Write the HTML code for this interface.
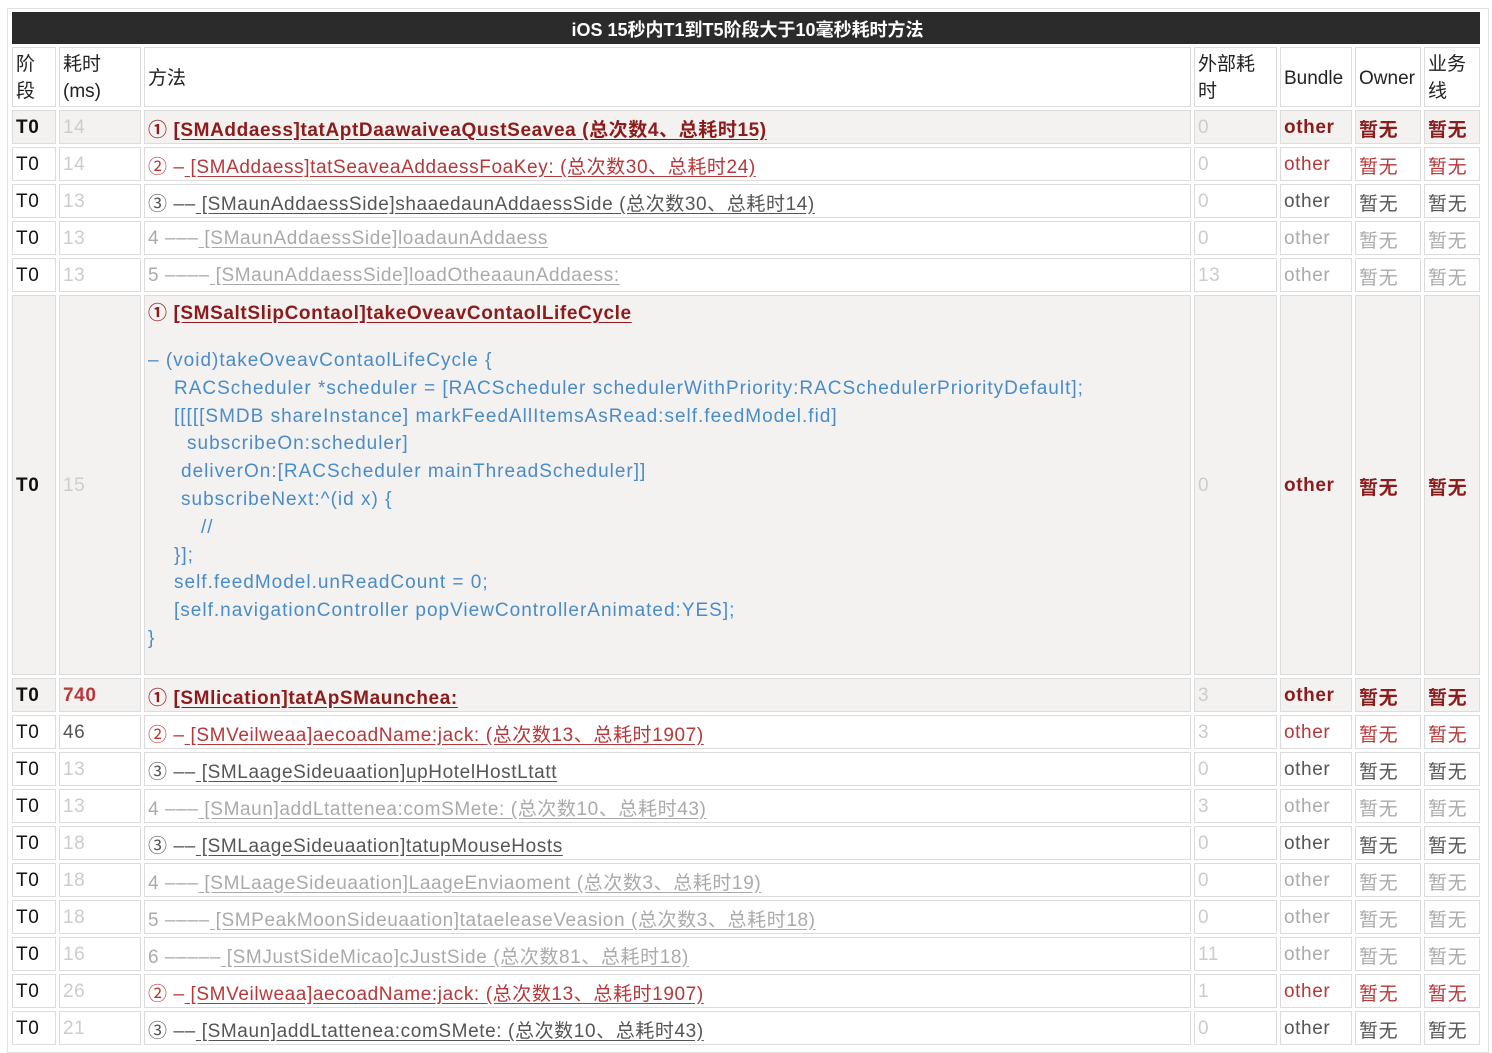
<!DOCTYPE html>
<html><head><meta charset="utf-8"><style>
body{margin:0;background:#fff;width:1492px;height:1047px;overflow:hidden;font-family:"Liberation Sans","Noto Sans CJK SC",sans-serif;}
.frame{position:absolute;left:7px;top:8px;width:1482px;height:1045px;border:1px solid #e2e2e2;box-sizing:border-box;}
table{position:absolute;left:9px;top:9px;border-collapse:separate;border-spacing:3px;table-layout:fixed;width:1474px;}
td{border:1px solid #dcdcdc;padding:2px 0 0 3px;font-size:19px;height:34px;box-sizing:border-box;white-space:nowrap;overflow:hidden;vertical-align:middle;letter-spacing:0.6px;}
td.title{background:#2b2b2b;color:#fff;text-align:center;font-weight:bold;font-size:18px;height:32px;border:none;letter-spacing:0;}
tr.h td{height:60px;color:#222;line-height:27px;white-space:normal;letter-spacing:0;}
.b td{font-weight:bold;background:#f4f1f1;color:#8b1c1c;}
.r td{color:#b5383a;}
.g td{color:#555;}
.l td{color:#aaa;}
.p{color:#111 !important;}
.n{color:#ccc !important;font-weight:normal !important;}
u{text-underline-offset:3px;}
.code{color:#4a8cc6;font-weight:normal;line-height:27.8px;letter-spacing:1px;}
.code div{white-space:pre;}
</style></head><body>
<div class="frame"></div>
<table>
<colgroup><col style="width:44px"><col style="width:82px"><col style="width:1047px"><col style="width:83px"><col style="width:72px"><col style="width:66px"><col style="width:56px"></colgroup>
<tr><td class="title" colspan="7">iOS 15秒内T1到T5阶段大于10毫秒耗时方法</td></tr>
<tr class="h"><td>阶<br>段</td><td>耗时<br>(ms)</td><td>方法</td><td>外部耗<br>时</td><td>Bundle</td><td>Owner</td><td>业务<br>线</td></tr>
<tr class="b"><td class="p">T0</td><td class="n">14</td><td>① <u>[SMAddaess]tatAptDaawaiveaQustSeavea (总次数4、总耗时15)</u></td><td class="n">0</td><td>other</td><td>暂无</td><td>暂无</td></tr>
<tr class="r"><td class="p">T0</td><td class="n">14</td><td>② –<u> [SMAddaess]tatSeaveaAddaessFoaKey: (总次数30、总耗时24)</u></td><td class="n">0</td><td>other</td><td>暂无</td><td>暂无</td></tr>
<tr class="g"><td class="p">T0</td><td class="n">13</td><td>③ ––<u> [SMaunAddaessSide]shaaedaunAddaessSide (总次数30、总耗时14)</u></td><td class="n">0</td><td>other</td><td>暂无</td><td>暂无</td></tr>
<tr class="l"><td class="p">T0</td><td class="n">13</td><td>4 –––<u> [SMaunAddaessSide]loadaunAddaess</u></td><td class="n">0</td><td>other</td><td>暂无</td><td>暂无</td></tr>
<tr class="l"><td class="p">T0</td><td class="n">13</td><td>5 ––––<u> [SMaunAddaessSide]loadOtheaaunAddaess:</u></td><td class="n">13</td><td>other</td><td>暂无</td><td>暂无</td></tr>
<tr class="b"><td class="p" style="height:380px">T0</td><td class="n">15</td><td style="vertical-align:top;padding-top:4px"><div style="line-height:28px">① <u>[SMSaltSlipContaol]takeOveavContaolLifeCycle</u></div><div class="code" style="margin-top:19px"><div>– (void)takeOveavContaolLifeCycle {</div><div style="padding-left:26px">RACScheduler *scheduler = [RACScheduler schedulerWithPriority:RACSchedulerPriorityDefault];</div><div style="padding-left:26px">[[[[[SMDB shareInstance] markFeedAllItemsAsRead:self.feedModel.fid]</div><div style="padding-left:39px">subscribeOn:scheduler]</div><div style="padding-left:33px">deliverOn:[RACScheduler mainThreadScheduler]]</div><div style="padding-left:33px">subscribeNext:^(id x) {</div><div style="padding-left:53px">//</div><div style="padding-left:26px">}];</div><div style="padding-left:26px">self.feedModel.unReadCount = 0;</div><div style="padding-left:26px">[self.navigationController popViewControllerAnimated:YES];</div><div>}</div></div></td><td class="n">0</td><td>other</td><td>暂无</td><td>暂无</td></tr>
<tr class="b"><td class="p">T0</td><td style="color:#b5383a">740</td><td>① <u>[SMlication]tatApSMaunchea:</u></td><td class="n">3</td><td>other</td><td>暂无</td><td>暂无</td></tr>
<tr class="r"><td class="p">T0</td><td style="color:#555">46</td><td>② –<u> [SMVeilweaa]aecoadName:jack: (总次数13、总耗时1907)</u></td><td class="n">3</td><td>other</td><td>暂无</td><td>暂无</td></tr>
<tr class="g"><td class="p">T0</td><td class="n">13</td><td>③ ––<u> [SMLaageSideuaation]upHotelHostLtatt</u></td><td class="n">0</td><td>other</td><td>暂无</td><td>暂无</td></tr>
<tr class="l"><td class="p">T0</td><td class="n">13</td><td>4 –––<u> [SMaun]addLtattenea:comSMete: (总次数10、总耗时43)</u></td><td class="n">3</td><td>other</td><td>暂无</td><td>暂无</td></tr>
<tr class="g"><td class="p">T0</td><td class="n">18</td><td>③ ––<u> [SMLaageSideuaation]tatupMouseHosts</u></td><td class="n">0</td><td>other</td><td>暂无</td><td>暂无</td></tr>
<tr class="l"><td class="p">T0</td><td class="n">18</td><td>4 –––<u> [SMLaageSideuaation]LaageEnviaoment (总次数3、总耗时19)</u></td><td class="n">0</td><td>other</td><td>暂无</td><td>暂无</td></tr>
<tr class="l"><td class="p">T0</td><td class="n">18</td><td>5 ––––<u> [SMPeakMoonSideuaation]tataeleaseVeasion (总次数3、总耗时18)</u></td><td class="n">0</td><td>other</td><td>暂无</td><td>暂无</td></tr>
<tr class="l"><td class="p">T0</td><td class="n">16</td><td>6 –––––<u> [SMJustSideMicao]cJustSide (总次数81、总耗时18)</u></td><td class="n">11</td><td>other</td><td>暂无</td><td>暂无</td></tr>
<tr class="r"><td class="p">T0</td><td class="n">26</td><td>② –<u> [SMVeilweaa]aecoadName:jack: (总次数13、总耗时1907)</u></td><td class="n">1</td><td>other</td><td>暂无</td><td>暂无</td></tr>
<tr class="g"><td class="p">T0</td><td class="n">21</td><td>③ ––<u> [SMaun]addLtattenea:comSMete: (总次数10、总耗时43)</u></td><td class="n">0</td><td>other</td><td>暂无</td><td>暂无</td></tr>
</table>
</body></html>
